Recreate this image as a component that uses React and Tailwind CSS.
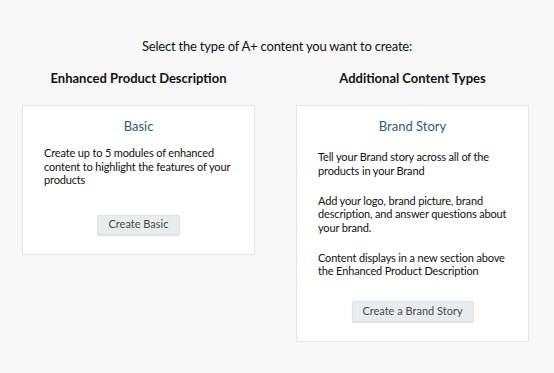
import React from 'react';

const font = { fontFamily: 'Lato, "Liberation Sans", sans-serif' };

const Card = ({ title, children, button, className, bodyClass }) => (
    <div className={`bg-white border border-[#e6e6e6] flex flex-col pt-[11px] ${className}`}>
        <h3 className="text-center text-[13px] text-[#2d5e6c] leading-[18px]">{title}</h3>
        <div className={`pl-[21px] text-[11px] leading-[13.5px] tracking-[-0.15px] text-[#111] whitespace-nowrap ${bodyClass}`}>{children}</div>
        <div className="flex justify-center">{button}</div>
    </div>
);

const Button = ({ label, className }) => (
    <button className={`bg-[#e8ecee] border border-[#e0e4e6] rounded-[2px] shadow-[0_1px_1px_rgba(0,0,0,0.12)] text-[11px] text-[#4a4a4a] ${className}`}>
        {label}
    </button>
);

export default function App() {
    return (
        <div style={font} className="w-[554px] h-[373px] bg-[#f8f8f8] pt-[37px]">
            <p className="text-center text-[13px] leading-[18px] tracking-[-0.2px] text-[#111]">
                Select the type of A+ content you want to create:
            </p>
            <div className="flex gap-[41px] pl-[22px] mt-[14px]">
                <div className="w-[233px] flex flex-col">
                    <h2 className="text-center font-bold text-[13px] leading-[18px] text-[#111]">Enhanced Product Description</h2>
                    <Card
                        title="Basic"
                        className="mt-[18px] h-[150px]"
                        bodyClass="mt-[11px]"
                        button={<Button label="Create Basic" className="mt-[28px] w-[83px] h-[20px]" />}
                    >
                        <p>Create up to 5 modules of enhanced<br />content to highlight the features of your<br />products</p>
                    </Card>
                </div>
                <div className="w-[233px] flex flex-col">
                    <h2 className="text-center font-bold text-[13px] leading-[18px] text-[#111]">Additional Content Types</h2>
                    <Card
                        title="Brand Story"
                        className="mt-[18px] h-[237px]"
                        bodyClass="mt-[15px]"
                        button={<Button label="Create a Brand Story" className="mt-[23px] w-[122px] h-[21px]" />}
                    >
                        <p>Tell your Brand story across all of the<br />products in your Brand</p>
                        <p className="mt-[16.5px]">Add your logo, brand picture, brand<br />description, and answer questions about<br />your brand.</p>
                        <p className="mt-[16.5px]">Content displays in a new section above<br />the Enhanced Product Description</p>
                    </Card>
                </div>
            </div>
        </div>
    );
}
